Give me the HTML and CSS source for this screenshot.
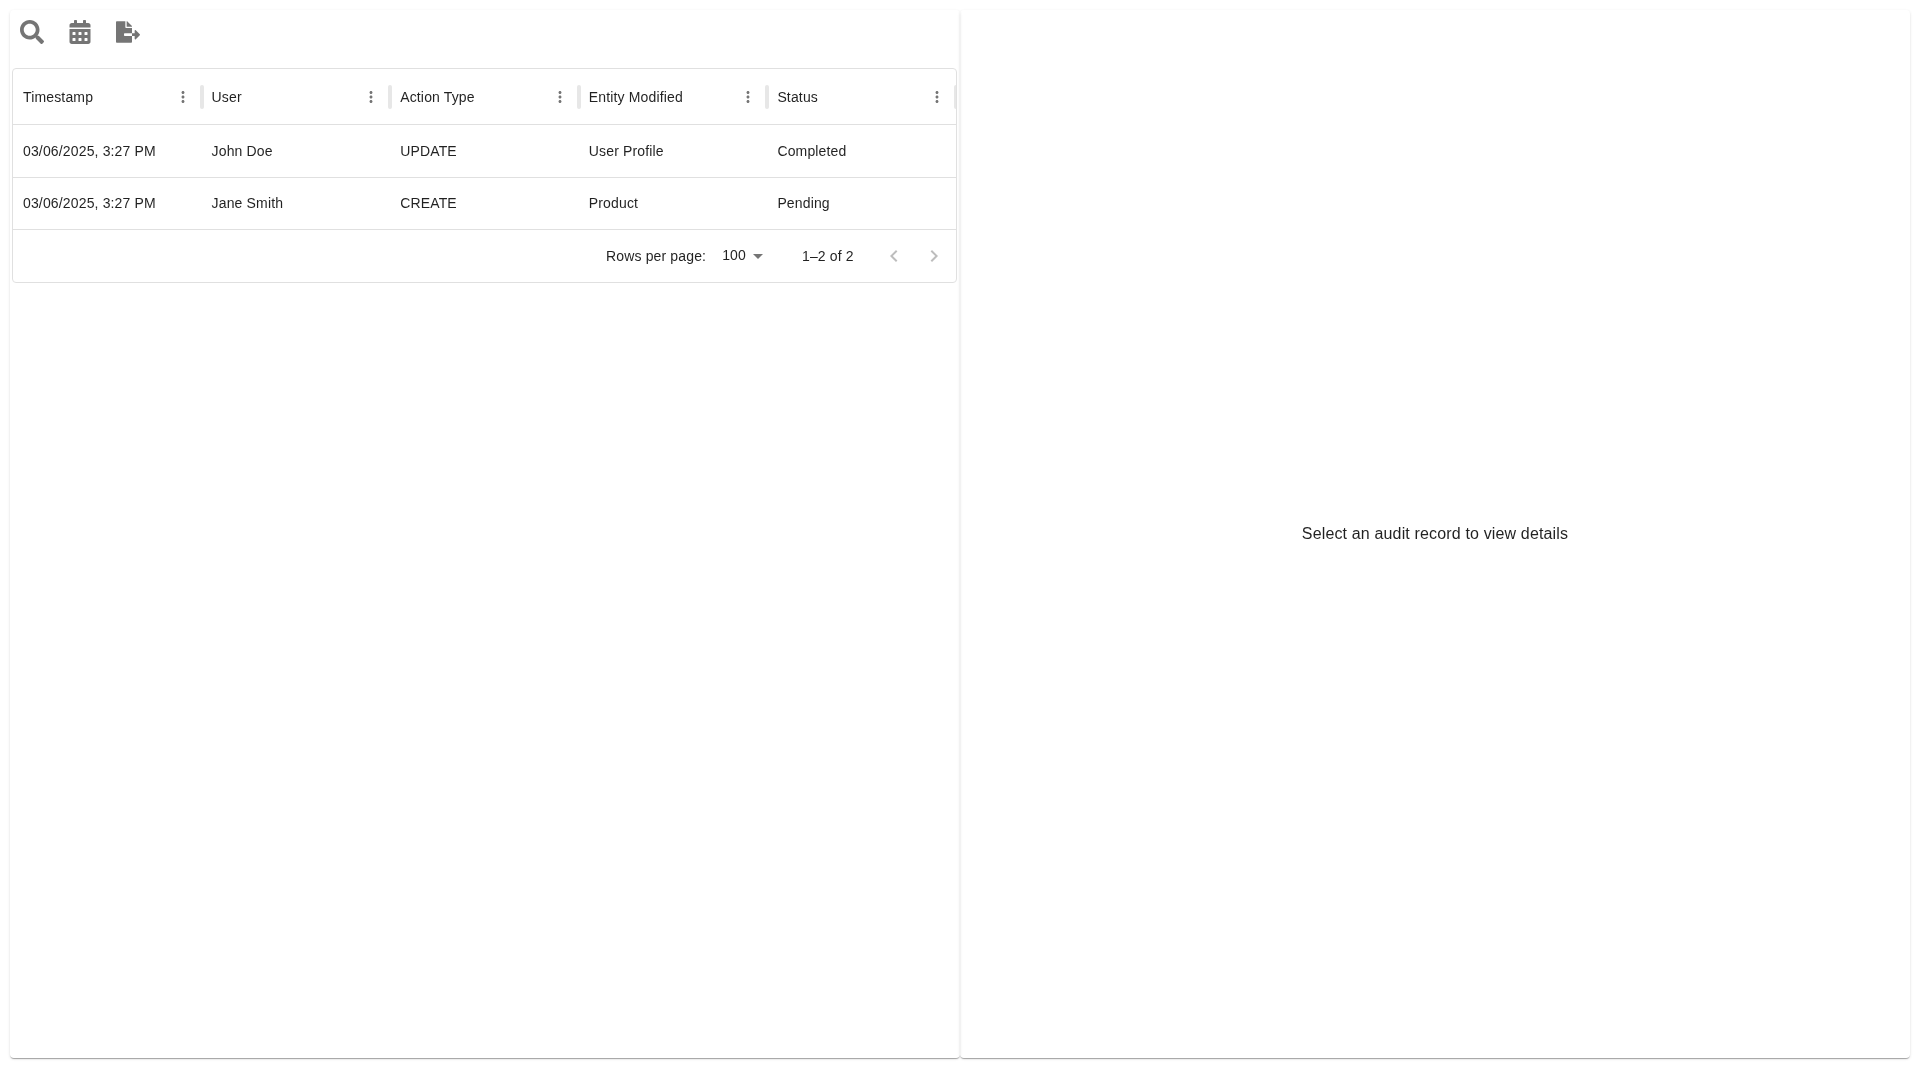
FILE: index.html
```html
<!DOCTYPE html>
<html lang="en">
<head>
<meta charset="utf-8">
<title>Audit records</title>
<link rel="stylesheet" href="styles.css">
</head>
<body>
<main class="layout">
  <section class="paper left">
    <div class="toolbar">
      <button class="tool"><svg class="ic" viewBox="0 0 512 512"><path d="M505 442.7L405.3 343c-4.5-4.5-10.6-7-17-7H372c27.6-35.3 44-79.7 44-128C416 93.1 322.9 0 208 0S0 93.1 0 208s93.1 208 208 208c48.3 0 92.7-16.4 128-44v16.3c0 6.4 2.5 12.5 7 17l99.7 99.7c9.4 9.4 24.6 9.4 33.9 0l28.3-28.3c9.4-9.4 9.4-24.6.1-34zM208 336c-70.7 0-128-57.2-128-128 0-70.7 57.2-128 128-128 70.7 0 128 57.2 128 128 0 70.7-57.2 128-128 128z"/></svg></button>
      <button class="tool"><svg class="ic" viewBox="0 0 448 512"><path d="M0 464c0 26.5 21.5 48 48 48h352c26.5 0 48-21.5 48-48V192H0v272zm320-196c0-6.6 5.4-12 12-12h40c6.6 0 12 5.4 12 12v40c0 6.6-5.4 12-12 12h-40c-6.6 0-12-5.4-12-12v-40zm0 128c0-6.6 5.4-12 12-12h40c6.6 0 12 5.4 12 12v40c0 6.6-5.4 12-12 12h-40c-6.6 0-12-5.4-12-12v-40zM192 268c0-6.6 5.4-12 12-12h40c6.6 0 12 5.4 12 12v40c0 6.6-5.4 12-12 12h-40c-6.6 0-12-5.4-12-12v-40zm0 128c0-6.6 5.4-12 12-12h40c6.6 0 12 5.4 12 12v40c0 6.6-5.4 12-12 12h-40c-6.6 0-12-5.4-12-12v-40zM64 268c0-6.6 5.4-12 12-12h40c6.6 0 12 5.4 12 12v40c0 6.6-5.4 12-12 12H76c-6.6 0-12-5.4-12-12v-40zm0 128c0-6.6 5.4-12 12-12h40c6.6 0 12 5.4 12 12v40c0 6.6-5.4 12-12 12H76c-6.6 0-12-5.4-12-12v-40zM400 64h-48V16c0-8.8-7.2-16-16-16h-32c-8.8 0-16 7.2-16 16v48H160V16c0-8.8-7.2-16-16-16h-32c-8.8 0-16 7.2-16 16v48H48C21.5 64 0 85.5 0 112v48h448v-48c0-26.5-21.5-48-48-48z"/></svg></button>
      <button class="tool"><svg class="ic" viewBox="0 0 576 512"><path d="M384 121.9c0-6.3-2.5-12.4-7-16.9L279.1 7c-4.5-4.5-10.6-7-17-7H256v128h128zM571 308l-95.7-96.4c-10.1-10.1-27.4-3-27.4 11.3V288h-64v64h64v65.2c0 14.3 17.3 21.4 27.4 11.3L571 332c6.6-6.6 6.6-17.4 0-24zm-379 28v-32c0-8.8 7.2-16 16-16h176V160H248c-13.2 0-24-10.8-24-24V0H24C10.7 0 0 10.7 0 24v464c0 13.3 10.7 24 24 24h336c13.3 0 24-10.7 24-24V352H208c-8.8 0-16-7.2-16-16z"/></svg></button>
    </div>
    <div class="grid">
      <div class="row head">
        <div class="cell"><span class="label">Timestamp</span><svg class="dots" viewBox="0 0 24 24"><path d="M12 8c1.1 0 2-.9 2-2s-.9-2-2-2-2 .9-2 2 .9 2 2 2zm0 2c-1.1 0-2 .9-2 2s.9 2 2 2 2-.9 2-2-.9-2-2-2zm0 6c-1.1 0-2 .9-2 2s.9 2 2 2 2-.9 2-2-.9-2-2-2z"/></svg><i class="sep"></i></div>
        <div class="cell"><span class="label">User</span><svg class="dots" viewBox="0 0 24 24"><path d="M12 8c1.1 0 2-.9 2-2s-.9-2-2-2-2 .9-2 2 .9 2 2 2zm0 2c-1.1 0-2 .9-2 2s.9 2 2 2 2-.9 2-2-.9-2-2-2zm0 6c-1.1 0-2 .9-2 2s.9 2 2 2 2-.9 2-2-.9-2-2-2z"/></svg><i class="sep"></i></div>
        <div class="cell"><span class="label">Action Type</span><svg class="dots" viewBox="0 0 24 24"><path d="M12 8c1.1 0 2-.9 2-2s-.9-2-2-2-2 .9-2 2 .9 2 2 2zm0 2c-1.1 0-2 .9-2 2s.9 2 2 2 2-.9 2-2-.9-2-2-2zm0 6c-1.1 0-2 .9-2 2s.9 2 2 2 2-.9 2-2-.9-2-2-2z"/></svg><i class="sep"></i></div>
        <div class="cell"><span class="label">Entity Modified</span><svg class="dots" viewBox="0 0 24 24"><path d="M12 8c1.1 0 2-.9 2-2s-.9-2-2-2-2 .9-2 2 .9 2 2 2zm0 2c-1.1 0-2 .9-2 2s.9 2 2 2 2-.9 2-2-.9-2-2-2zm0 6c-1.1 0-2 .9-2 2s.9 2 2 2 2-.9 2-2-.9-2-2-2z"/></svg><i class="sep"></i></div>
        <div class="cell"><span class="label">Status</span><svg class="dots" viewBox="0 0 24 24"><path d="M12 8c1.1 0 2-.9 2-2s-.9-2-2-2-2 .9-2 2 .9 2 2 2zm0 2c-1.1 0-2 .9-2 2s.9 2 2 2 2-.9 2-2-.9-2-2-2zm0 6c-1.1 0-2 .9-2 2s.9 2 2 2 2-.9 2-2-.9-2-2-2z"/></svg><i class="sep"></i></div>
      </div>
      <div class="row body">
        <div class="cell">03/06/2025, 3:27 PM</div>
        <div class="cell">John Doe</div>
        <div class="cell">UPDATE</div>
        <div class="cell">User Profile</div>
        <div class="cell">Completed</div>
      </div>
      <div class="row body">
        <div class="cell">03/06/2025, 3:27 PM</div>
        <div class="cell">Jane Smith</div>
        <div class="cell">CREATE</div>
        <div class="cell">Product</div>
        <div class="cell">Pending</div>
      </div>
      <div class="pager">
        <span class="rows-label">Rows per page:</span>
        <span class="select">100<svg class="caret" viewBox="0 0 24 24"><path d="M7 10l5 5 5-5z"/></svg></span>
        <span class="range">1–2 of 2</span>
        <span class="nav">
          <svg class="chev" viewBox="0 0 24 24"><path d="M15.41 7.41 14 6l-6 6 6 6 1.41-1.41L10.83 12z"/></svg>
          <svg class="chev" viewBox="0 0 24 24"><path d="M10 6 8.59 7.41 13.17 12l-4.58 4.59L10 18l6-6z"/></svg>
        </span>
      </div>
    </div>
  </section>
  <section class="paper right">
    <p class="empty">Select an audit record to view details</p>
  </section>
</main>
</body>
</html>
```
FILE: styles.css
```css
* { box-sizing: border-box; }
html, body { margin: 0; height: 100%; background: #fff; }
body {
  font-family: "Liberation Sans", Arial, sans-serif;
  color: rgba(0, 0, 0, 0.87);
  font-size: 14px;
  letter-spacing: .15px;
  overflow: hidden;
}
.layout {
  display: flex;
  padding: 10px 10px 0;
  height: 1058px;
  will-change: transform;
}
.paper {
  flex: 0 0 50%;
  min-width: 0;
  border-radius: 4px;
  box-shadow: 0 2px 1px -1px rgba(0,0,0,.2), 0 1px 1px 0 rgba(0,0,0,.14), 0 1px 3px 0 rgba(0,0,0,.12);
}
.left { padding: 0 3px 0 2px; }
.toolbar {
  display: flex;
  margin: -2px 0 0 -4px;
  height: 60px;
}
.tool {
  width: 48px;
  height: 48px;
  padding: 0;
  border: 0;
  background: none;
  display: flex;
  align-items: center;
  justify-content: center;
}
.ic { width: 24px; height: 24px; fill: #757575; display: block; }
.grid {
  border: 1px solid #e0e0e0;
  border-radius: 4px;
  width: 945px;
  overflow: hidden;
}
.row { display: grid; grid-template-columns: repeat(5, 188.6px); }
.head { height: 56px; border-bottom: 1px solid #e0e0e0; }
.body { height: 52.5px; border-bottom: 1px solid #e0e0e0; }
.cell {
  position: relative;
  display: flex;
  align-items: center;
  padding: 0 10px;
  min-width: 0;
}
.label { flex: 1; }
.dots { width: 18px; height: 18px; fill: #757575; }
.sep {
  position: absolute;
  right: -2px;
  top: 16px;
  width: 4px;
  height: 24px;
  border-radius: 2px;
  background: #e7e7e7;
}
.pager {
  height: 52px;
  display: flex;
  align-items: center;
  padding-left: 593px;
}
.select {
  display: flex;
  align-items: center;
  margin-left: 16px;
  margin-top: -2px;
}
.caret { width: 24px; height: 24px; fill: #757575; margin-top: 2px; }
.range { margin-left: 32px; }
.nav { display: flex; gap: 16px; margin-left: 28px; }
.chev { width: 24px; height: 24px; fill: rgba(0,0,0,.26); }
.right { display: flex; align-items: center; justify-content: center; }
.empty { margin: 0; font-size: 16px; }
```
